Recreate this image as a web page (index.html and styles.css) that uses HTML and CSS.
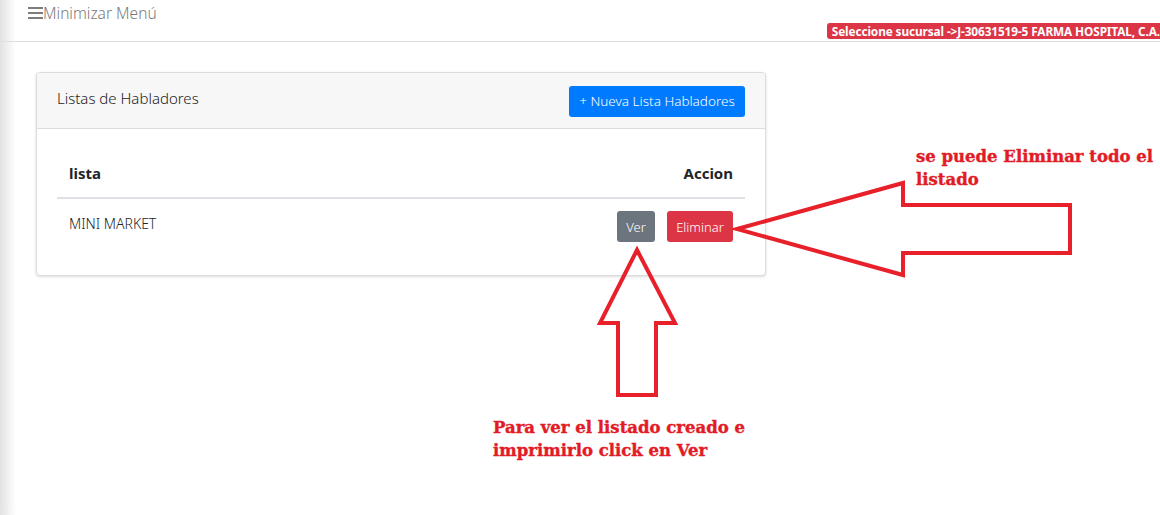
FILE: index.html
```html
<!DOCTYPE html>
<html lang="es">
<head>
<meta charset="utf-8">
<title>Listas de Habladores</title>
<link rel="stylesheet" href="styles.css">
</head>
<body>
<div class="page">
  <div class="side-shadow"></div>
  <header class="navbar">
    <div class="menu-toggle">
      <svg class="burger" width="15" height="13" viewBox="0 0 15 13"><rect x="0" y="1" width="15" height="2" fill="#7d7d7d"/><rect x="0" y="6" width="15" height="2" fill="#7d7d7d"/><rect x="0" y="11" width="15" height="2" fill="#7d7d7d"/></svg>
      <span>Minimizar Menú</span>
    </div>
    <div class="branch-badge">Seleccione sucursal -&gt;J-30631519-5 FARMA HOSPITAL, C.A.</div>
  </header>
  <main class="content">
    <section class="card">
      <div class="card-header">
        <h2 class="card-title">Listas de Habladores</h2>
        <button class="btn btn-primary">+ Nueva Lista Habladores</button>
      </div>
      <div class="card-body">
        <table class="table">
          <thead>
            <tr><th class="col-name">lista</th><th class="col-action">Accion</th></tr>
          </thead>
          <tbody>
            <tr>
              <td class="col-name">MINI MARKET</td>
              <td class="col-action">
                <div class="actions">
                  <button class="btn btn-sm btn-secondary">Ver</button>
                  <button class="btn btn-sm btn-danger">Eliminar</button>
                </div>
              </td>
            </tr>
          </tbody>
        </table>
      </div>
    </section>
  </main>

  <svg class="annot-arrows" width="1160" height="515" viewBox="0 0 1160 515">
    <polygon points="737,229 903,183 903,205 1070,205 1070,253 903,253 903,275" fill="none" stroke="#e8202a" stroke-width="4" stroke-linejoin="miter"/>
    <polygon points="637,250 675,323 656,323 656,395 618,395 618,323 600,323" fill="none" stroke="#e8202a" stroke-width="4" stroke-linejoin="miter"/>
  </svg>
  <div class="note note-delete">se puede Eliminar todo el<br>listado</div>
  <div class="note note-view">Para ver el listado creado e<br>imprimirlo click en Ver</div>
</div>
</body>
</html>
```
FILE: styles.css
```css
* { box-sizing: border-box; }
html, body { margin: 0; padding: 0; background: #fff; }
body {
  font-family: "Noto Sans", "Open Sans", sans-serif;
  color: #212529;
  width: 1160px;
  height: 515px;
  overflow: hidden;
}
.page { position: relative; width: 1160px; height: 515px; }
.side-shadow {
  position: absolute; left: 0; top: 0; bottom: 0; width: 16px;
  background: linear-gradient(to right, #e2e2e2, rgba(255,255,255,0));
  pointer-events: none;
}
.navbar {
  height: 42px;
  border-bottom: 1px solid #dddddd;
  display: flex;
  justify-content: space-between;
  align-items: flex-start;
  padding-left: 28px;
}
.menu-toggle {
  font-size: 15.5px;
  font-weight: 300;
  color: #7a7a7a;
  line-height: 28px;
  display: flex;
  align-items: center;
  margin-top: -1px;
}
.burger { display: block; margin-top: -2px; }
.branch-badge {
  margin-top: 23px;
  background: #dc3545;
  color: #fff;
  font-family: "Noto Sans", "Open Sans", sans-serif;
  font-weight: bold;
  font-size: 11.8px;
  line-height: 16px;
  height: 16px;
  padding: 0 0 0 5px;
  border-radius: 3px 0 0 3px;
  white-space: nowrap;
  letter-spacing: -0.1px;
}
.content { padding: 30px 0 0 36px; }
.card {
  width: 730px;
  border: 1px solid #dcdcdc;
  border-radius: 4px;
  box-shadow: 0 1px 3px rgba(0,0,0,0.14);
  background: #fff;
}
.card-header {
  height: 56px;
  background: #f7f7f7;
  border-bottom: 1px solid #dcdcdc;
  border-radius: 4px 4px 0 0;
  display: flex;
  justify-content: space-between;
  align-items: center;
  padding: 0 20px 0 20px;
}
.card-title {
  margin: 0;
  font-size: 15px;
  font-weight: 300;
  color: #222;
  margin-top: -5px;
}
.btn {
  border: 0;
  border-radius: 3px;
  color: #fff;
  font-family: "Noto Sans", "Open Sans", sans-serif;
  font-weight: 300;
  cursor: pointer;
}
.btn-primary {
  background: #007bff;
  font-size: 13.5px;
  height: 31px;
  width: 176px;
  padding: 0;
  margin-top: 1px;
}
.card-body { padding: 20px 20px 33px 20px; }
.table { width: 100%; border-collapse: collapse; }
.table th {
  font-size: 15px;
  font-weight: 700;
  padding: 14px 12px 14px 12px;
  text-align: left;
  border-bottom: 2px solid #dee2e6;
}
.table th.col-action { text-align: right; }
.table td {
  font-size: 14px;
  font-weight: 300;
  padding: 12px 12px 0 12px;
  vertical-align: top;
}
.table td.col-name { padding-top: 15px; }
.actions { display: flex; justify-content: flex-end; gap: 12px; }
.btn-sm { font-size: 13px; height: 31px; padding: 0; }
.btn-secondary { background: #6c757d; width: 38px; }
.btn-danger { background: #dc3545; width: 66px; }
.annot-arrows { position: absolute; left: 0; top: 0; pointer-events: none; }
.note {
  position: absolute;
  font-family: "DejaVu Serif", "Liberation Serif", serif;
  font-weight: bold;
  color: #e21c26;
  font-size: 16.5px;
  line-height: 23px;
  -webkit-text-stroke: 0.4px #e21c26;
  white-space: nowrap;
}
.note-delete { left: 916px; top: 145px; }
.note-view { left: 493px; top: 416px; }
```
